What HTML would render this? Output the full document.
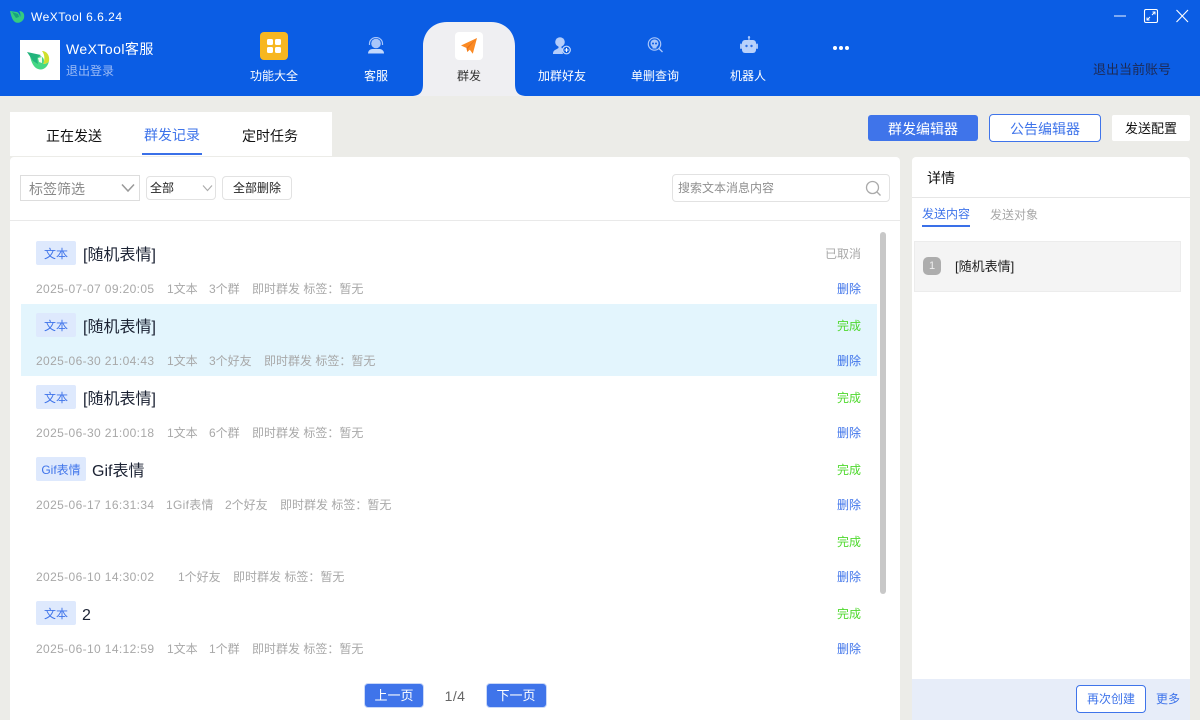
<!DOCTYPE html>
<html lang="zh"><head><meta charset="utf-8"><title>WeXTool</title>
<style>
*{box-sizing:border-box}
html,body{margin:0;padding:0}
body{width:1200px;height:720px;overflow:hidden;position:relative;background:#ecece8;font-family:"Liberation Sans","Noto Sans CJK SC",sans-serif;font-size:12px;color:#222}
.a{position:absolute}
.t{position:absolute;white-space:nowrap;line-height:20px;height:20px}
.c{text-align:center;transform:translateX(-50%)}
.r{transform:translateX(-100%)}
.w{color:#fff}
.g{color:#a8a8a8}
.b{color:#3f74ea}
.m{margin-top:1px}
.d{letter-spacing:.37px}
.tag{position:absolute;left:36px;height:24px;line-height:26px;background:#dee9fd;color:#3f74ea;border-radius:2px;text-align:center;font-size:12px}
.title{font-size:16px;color:#1b2233;margin-top:2px}
.ok{color:#4fd92e}
svg{position:absolute;display:block}
</style></head><body>
<div class="a" style="left:0;top:0;width:1200px;height:96px;background:#0b5de4"></div>

<svg style="left:9px;top:9px" width="17" height="16" viewBox="0 0 17 16"><path d="M1 2l7 1c2 1 3 3 3 5 1-2 0-5-1-6 4 0 6 3 5 7-1 4-6 6-9 4C3 11 2 6 1 2z" fill="#35cc80"/><path d="M3 3l6 2 1 3-3 1z" fill="#16a37c"/></svg>
<span class="t w" style="left:31px;top:7px;font-size:12px;letter-spacing:.5px">WeXTool 6.6.24</span>

<div class="a" style="left:20px;top:40px;width:40px;height:40px;background:#fff"></div>
<svg style="left:25px;top:48px" width="30" height="26" viewBox="0 0 30 26"><path d="M17 3c5 0 8 5 7 10-1 2-3 3-6 3 2-4 2-9-1-13z" fill="#cfe02c"/><path d="M5 8l10 0c4 1 5 5 3 8 3 0 5-1 6-3-1 6-6 10-11 8C9 20 6 14 5 8z" fill="#46d884"/><path d="M2 4l14 3-4 3 1 6-5-3z" fill="#22b47c"/><path d="M13 10l4-1 0 6-3-1z" fill="#eefbee"/></svg>
<span class="t w" style="left:66px;top:39px;font-size:14px;letter-spacing:.45px">WeXTool客服</span>
<span class="t" style="left:66px;top:61px;font-size:12px;color:#9dbcf6">退出登录</span>

<!-- nav -->
<div class="a" style="left:260px;top:32px;width:28px;height:28px;background:#f7b720;border-radius:4px"></div>
<div class="a" style="left:267px;top:39px;width:6px;height:6px;background:#fff;border-radius:1.500px"></div>
<div class="a" style="left:275px;top:39px;width:6px;height:6px;background:#fff;border-radius:1.500px"></div>
<div class="a" style="left:267px;top:47px;width:6px;height:6px;background:#fff;border-radius:1.500px"></div>
<div class="a" style="left:275px;top:47px;width:6px;height:6px;background:#fff;border-radius:1.500px"></div>
<span class="t w c" style="left:274px;top:66px">功能大全</span>

<svg style="left:367px;top:37px" width="18" height="17" viewBox="0 0 18 17"><path d="M2.500 8V6.500a6.500 6 0 0 1 13 0V8" fill="none" stroke="#a9c6fa" stroke-width="1.200"/><circle cx="9" cy="6.500" r="4.800" fill="#a9c6fa"/><path d="M1 16.500c0-3 2.500-4.500 4.500-4.500h7c2 0 4.500 1.500 4.500 4.500z" fill="#c3d8fc"/></svg>
<span class="t w c" style="left:376px;top:66px">客服</span>

<svg style="left:411px;top:22px" width="116" height="74" viewBox="0 0 116 74"><path d="M0 74c8 0 12-3 12-12V24C12 10 22 0 36 0h44c14 0 24 10 24 24v38c0 9 4 12 12 12z" fill="#efeff2"/></svg>
<div class="a" style="left:455px;top:32px;width:28px;height:28px;background:#fff;border-radius:4px"></div>
<svg style="left:460px;top:37px" width="18" height="18" viewBox="0 0 18 18"><path d="M17 1L1 8.500l5.500 2.500.8 4 2.500-2.200 3 4z" fill="#fb8a23"/><path d="M17 1L6.500 11l.8 4 .5-3.500z" fill="#e8701a"/></svg>
<span class="t c" style="left:469px;top:66px;color:#333">群发</span>

<svg style="left:552px;top:36px" width="20" height="20" viewBox="0 0 20 20"><circle cx="8" cy="6" r="4.800" fill="#b4cdfb"/><path d="M1 18c0-2 .500-3.500 3-4.500l2.500-1.500v-2h3v2l2 1a5.500 5.500 0 0 0-.5 5z" fill="#b4cdfb"/><circle cx="14.500" cy="14" r="3.800" fill="#0b5de4" stroke="#c5d9fc" stroke-width="1.200"/><path d="M14.500 12v4M12.500 14h4" stroke="#fff" stroke-width="1.100"/></svg>
<span class="t w c" style="left:562px;top:66px">加群好友</span>

<svg style="left:647px;top:37px" width="17" height="16" viewBox="0 0 17 16"><circle cx="7.500" cy="7" r="6.200" fill="none" stroke="#a9c6fa" stroke-width="1.200"/><circle cx="7.500" cy="6.500" r="4" fill="#a9c6fa"/><rect x="5.500" y="9" width="4" height="2.500" fill="#a9c6fa"/><circle cx="6" cy="6.500" r="1" fill="#0b5de4"/><circle cx="9" cy="6.500" r="1" fill="#0b5de4"/><path d="M12 11.500l3.500 3.500" stroke="#a9c6fa" stroke-width="1.300"/></svg>
<span class="t w c" style="left:655px;top:66px">单删查询</span>

<svg style="left:739px;top:36px" width="20" height="18" viewBox="0 0 20 18"><path d="M10 0v4" stroke="#a9c6fa" stroke-width="1.200"/><circle cx="10" cy="1.500" r="1.200" fill="#a9c6fa"/><rect x="3" y="4" width="14" height="13" rx="3" fill="#b9d1fb"/><rect x="1" y="7.500" width="2" height="5.500" rx="1" fill="#a9c6fa"/><rect x="17" y="7.500" width="2" height="5.500" rx="1" fill="#a9c6fa"/><circle cx="7.500" cy="10" r="1.200" fill="#2d70e6"/><circle cx="12.500" cy="10" r="1.200" fill="#2d70e6"/></svg>
<span class="t w c" style="left:748px;top:66px">机器人</span>

<div class="a" style="left:833px;top:46px;width:4px;height:4px;background:#fff;border-radius:50%"></div>
<div class="a" style="left:839px;top:46px;width:4px;height:4px;background:#fff;border-radius:50%"></div>
<div class="a" style="left:845px;top:46px;width:4px;height:4px;background:#fff;border-radius:50%"></div>

<span class="t" style="left:1093px;top:60px;font-size:13px;color:#1d2a55">退出当前账号</span>

<!-- window controls -->
<svg style="left:1110px;top:5px" width="85" height="22" viewBox="0 0 85 22"><path d="M4 11h12" stroke="#dfe9fd" stroke-width="1.100"/><rect x="34.500" y="4.500" width="13" height="13" rx="1.500" fill="none" stroke="#fff" stroke-width="1.100"/><path d="M37 15l3-3M37 12.500V15h2.500M45 7l-3 3M42.500 7H45v2.500" fill="none" stroke="#fff"/><path d="M66.500 5l11.500 12M78 5L66.500 17" stroke="#fff" stroke-width="1.100"/></svg>

<!-- tabs -->
<div class="a" style="left:10px;top:112px;width:322px;height:44px;background:#fff"></div>
<span class="t" style="left:46px;top:126px;font-size:14px;color:#111">正在发送</span>
<span class="t" style="left:144px;top:125px;font-size:14px;color:#3f74ea">群发记录</span>
<div class="a" style="left:142px;top:153px;width:60px;height:2px;background:#3a70e8"></div>
<span class="t" style="left:242px;top:126px;font-size:14px;color:#111">定时任务</span>

<!-- top buttons -->
<div class="a" style="left:868px;top:115px;width:110px;height:26px;background:#3f74ea;border-radius:3px"></div>
<span class="t w c" style="left:923px;top:119px;font-size:14px">群发编辑器</span>
<div class="a" style="left:989px;top:114px;width:112px;height:28px;background:#fff;border:1px solid #3f74ea;border-radius:4px"></div>
<span class="t b c" style="left:1045px;top:119px;font-size:14px">公告编辑器</span>
<div class="a" style="left:1112px;top:115px;width:78px;height:26px;background:#fff;border-radius:2px"></div>
<span class="t c" style="left:1151px;top:119px;font-size:13px;color:#111">发送配置</span>

<!-- left panel -->
<div class="a" style="left:10px;top:157px;width:890px;height:563px;background:#fff;border-radius:4px 4px 0 0"></div>
<div class="a" style="left:10px;top:220px;width:890px;height:1px;background:#e9e9e9"></div>

<div class="a" style="left:20px;top:175px;width:120px;height:26px;border:1px solid #ddd"></div>
<span class="t" style="left:29px;top:179px;font-size:14px;color:#888">标签筛选</span>
<svg style="left:120px;top:183px" width="16" height="10" viewBox="0 0 16 10"><path d="M2 1.500l6 6.500 6-6.500" fill="none" stroke="#999" stroke-width="1.500"/></svg>
<div class="a" style="left:146px;top:176px;width:70px;height:24px;border:1px solid #e2e2e2;border-radius:4px"></div>
<span class="t" style="left:150px;top:178px;color:#222">全部</span>
<svg style="left:202px;top:184px" width="11" height="8" viewBox="0 0 11 8"><path d="M1 1.500l4.500 5 4.500-5" fill="none" stroke="#aaa" stroke-width="1.100"/></svg>
<div class="a" style="left:222px;top:176px;width:70px;height:24px;border:1px solid #e2e2e2;border-radius:4px"></div>
<span class="t c" style="left:257px;top:178px;color:#222">全部删除</span>

<div class="a" style="left:672px;top:174px;width:218px;height:28px;border:1px solid #e2e2e2;border-radius:4px"></div>
<span class="t" style="left:678px;top:178px;color:#8f8f8f">搜索文本消息内容</span>
<svg style="left:865px;top:180px" width="17" height="17" viewBox="0 0 17 17"><circle cx="7.500" cy="7.500" r="6" fill="none" stroke="#aaa" stroke-width="1.300"/><path d="M12 12l3.500 3.500" stroke="#aaa" stroke-width="1.300"/></svg>

<div class="a" style="left:21px;top:304px;width:856px;height:72px;background:#e3f5fd"></div>
<div class="a" style="left:880px;top:232px;width:6px;height:362px;background:#c8c8c8;border-radius:3px"></div>

<!-- row 1 -->
<div class="tag" style="top:241px;width:40px">文本</div>
<span class="t title" style="left:83px;top:244px">[随机表情]</span>
<span class="t g r" style="left:861px;top:244px">已取消</span>
<span class="t g m d" style="left:36px;top:278px">2025-07-07 09:20:05</span>
<span class="t g m" style="left:167px;top:278px">1文本</span><span class="t g m" style="left:209px;top:278px">3个群</span><span class="t g m" style="left:252px;top:278px">即时群发 标签：暂无</span>
<span class="t b r m" style="left:861px;top:278px">删除</span>
<!-- row 2 -->
<div class="tag" style="top:313px;width:40px">文本</div>
<span class="t title" style="left:83px;top:316px">[随机表情]</span>
<span class="t ok r" style="left:861px;top:316px">完成</span>
<span class="t g m d" style="left:36px;top:350px">2025-06-30 21:04:43</span>
<span class="t g m" style="left:167px;top:350px">1文本</span><span class="t g m" style="left:209px;top:350px">3个好友</span><span class="t g m" style="left:264px;top:350px">即时群发 标签：暂无</span>
<span class="t b r m" style="left:861px;top:350px">删除</span>
<!-- row 3 -->
<div class="tag" style="top:385px;width:40px">文本</div>
<span class="t title" style="left:83px;top:388px">[随机表情]</span>
<span class="t ok r" style="left:861px;top:388px">完成</span>
<span class="t g m d" style="left:36px;top:422px">2025-06-30 21:00:18</span>
<span class="t g m" style="left:167px;top:422px">1文本</span><span class="t g m" style="left:209px;top:422px">6个群</span><span class="t g m" style="left:252px;top:422px">即时群发 标签：暂无</span>
<span class="t b r m" style="left:861px;top:422px">删除</span>
<!-- row 4 -->
<div class="tag" style="top:457px;width:50px">Gif表情</div>
<span class="t title" style="left:92px;top:460px">Gif表情</span>
<span class="t ok r" style="left:861px;top:460px">完成</span>
<span class="t g m d" style="left:36px;top:494px">2025-06-17 16:31:34</span>
<span class="t g m" style="left:166px;top:494px;letter-spacing:.3px">1Gif表情</span><span class="t g m" style="left:225px;top:494px">2个好友</span><span class="t g m" style="left:280px;top:494px">即时群发 标签：暂无</span>
<span class="t b r m" style="left:861px;top:494px">删除</span>
<!-- row 5 -->
<span class="t ok r" style="left:861px;top:532px">完成</span>
<span class="t g m d" style="left:36px;top:566px">2025-06-10 14:30:02</span>
<span class="t g m" style="left:178px;top:566px">1个好友</span><span class="t g m" style="left:233px;top:566px">即时群发 标签：暂无</span>
<span class="t b r m" style="left:861px;top:566px">删除</span>
<!-- row 6 -->
<div class="tag" style="top:601px;width:40px">文本</div>
<span class="t title" style="left:82px;top:604px">2</span>
<span class="t ok r" style="left:861px;top:604px">完成</span>
<span class="t g m d" style="left:36px;top:638px">2025-06-10 14:12:59</span>
<span class="t g m" style="left:167px;top:638px">1文本</span><span class="t g m" style="left:209px;top:638px">1个群</span><span class="t g m" style="left:252px;top:638px">即时群发 标签：暂无</span>
<span class="t b r m" style="left:861px;top:638px">删除</span>

<!-- pagination -->
<div class="a" style="left:364px;top:683px;width:60px;height:25px;background:#3f74ea;border:1px solid #c9d8f8;border-radius:4px"></div>
<span class="t w c" style="left:394px;top:686px;font-size:13px">上一页</span>
<span class="t c" style="left:455px;top:686px;font-size:14px;letter-spacing:.4px;color:#666">1/4</span>
<div class="a" style="left:486px;top:683px;width:61px;height:25px;background:#3f74ea;border:1px solid #c9d8f8;border-radius:4px"></div>
<span class="t w c" style="left:516px;top:686px;font-size:13px">下一页</span>

<!-- right panel -->
<div class="a" style="left:912px;top:157px;width:278px;height:563px;background:#fff;border-radius:4px 4px 0 0"></div>
<div class="a" style="left:912px;top:197px;width:278px;height:1px;background:#e6e6e6"></div>
<span class="t" style="left:927px;top:168px;font-size:14px;color:#111">详情</span>
<span class="t b" style="left:922px;top:204px">发送内容</span>
<div class="a" style="left:922px;top:225px;width:48px;height:2px;background:#3a70e8"></div>
<span class="t g" style="left:990px;top:205px">发送对象</span>
<div class="a" style="left:914px;top:241px;width:267px;height:51px;background:#f4f4f4;border:1px solid #ececec"></div>
<div class="a" style="left:923px;top:257px;width:18px;height:18px;background:#adadad;border-radius:5px;color:#eee;text-align:center;line-height:18px;font-size:11px">1</div>
<span class="t" style="left:955px;top:257px;font-size:13px;color:#222">[随机表情]</span>
<div class="a" style="left:912px;top:679px;width:278px;height:41px;background:#e7edf9"></div>
<div class="a" style="left:1076px;top:685px;width:70px;height:28px;background:#fff;border:1px solid #3f74ea;border-radius:4px"></div>
<span class="t b c" style="left:1111px;top:689px">再次创建</span>
<span class="t b" style="left:1156px;top:689px">更多</span>
</body></html>
